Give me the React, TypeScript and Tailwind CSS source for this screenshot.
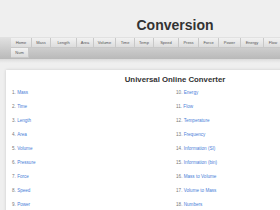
import React from 'react'

const nav = [
  ['Home', 21],
  ['Mass', 19],
  ['Length', 26],
  ['Area', 17],
  ['Volume', 22],
  ['Time', 19],
  ['Temp', 19],
  ['Speed', 25],
  ['Press', 20],
  ['Force', 20],
  ['Power', 22],
  ['Energy', 23],
  ['Flow', 19],
  ['Num', 18],
] as const

const left = ['Mass', 'Time', 'Length', 'Area', 'Volume', 'Pressure', 'Force', 'Speed', 'Power']
const right = [
  'Energy',
  'Flow',
  'Temperature',
  'Frequency',
  'Information (SI)',
  'Information (bin)',
  'Mass to Volume',
  'Volume to Mass',
  'Numbers',
]

function Column({ items, start }: { items: string[]; start: number }) {
  return (
    <ul className="flex flex-col">
      {items.map((t, i) => (
        <li key={t} className="flex h-[14.1px] items-center text-[4.6px] text-[#777]">
          <span>{start + i}.&nbsp;</span>
          <a className="text-[#4a80d8]">{t}</a>
        </li>
      ))}
    </ul>
  )
}

export default function App() {
  return (
    <div className="h-[210px] w-[280px] overflow-hidden bg-[#efefef] font-['Liberation_Sans',Arial,sans-serif]">
      <div className="w-[350px]">
        <h1 className="flex h-[37px] items-center justify-center pt-[16px] pb-[4px] text-[14px] font-bold leading-none text-[#333]">
          Conversion
        </h1>
        <div className="h-[22px] bg-gradient-to-b from-[#e2e2e2] to-[#b9b9b9] pt-[1px]">
          <div className="flex w-[296px] flex-wrap pl-[11px]">
            {nav.map(([n, w]) => (
              <div
                key={n}
                style={{ width: w }}
                className="flex h-[10px] items-center justify-center border-r border-b border-[#c8c8c8] bg-gradient-to-b from-[#f2f2f2] to-[#dcdcdc] text-[4px] text-[#555]"
              >
                {n}
              </div>
            ))}
          </div>
        </div>
        <div className="h-[4px] bg-gradient-to-b from-[#dcdcdc] to-[#efefef]" />
        <div className="ml-[6px] mt-[7px] w-[338px] bg-white pt-[5px] shadow-[0_0_3px_rgba(0,0,0,0.15)]">
          <h2 className="text-center text-[7.8px] font-bold leading-[10px] text-[#333]">Universal Online Converter</h2>
          <div className="mt-[1px] flex pl-[6px]">
            <div className="w-[164px]">
              <Column items={left} start={1} />
            </div>
            <Column items={right} start={10} />
          </div>
        </div>
      </div>
    </div>
  )
}
